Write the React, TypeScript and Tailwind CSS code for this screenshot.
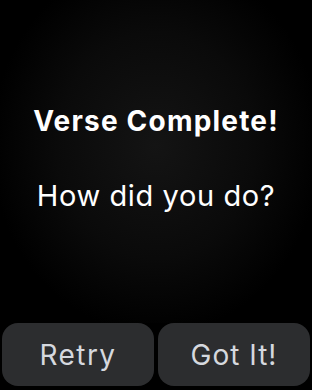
export default function App() {
  return (
    <div
      className="w-[312px] h-[390px] bg-black flex flex-col overflow-hidden"
      style={{ fontFamily: 'Inter, "Noto Sans", sans-serif' }}
    >
      <div className="flex-1 flex flex-col items-center bg-[radial-gradient(ellipse_at_50%_45%,#141414_0%,#0a0a0a_45%,#000_75%)]">
        <h1 className="mt-[103px] text-[28px] leading-[36px] font-bold text-white tracking-[1.2px]">
          Verse Complete!
        </h1>
        <p className="mt-[39px] text-[29px] leading-[36px] font-normal text-white tracking-[0.6px]">
          How did you do?
        </p>
      </div>
      <div className="flex gap-[4px] px-[2px] pb-[4px]">
        <button className="flex-1 h-[63px] rounded-[16px] bg-[#2c2d2f] text-[28px] text-[#d5d8de] font-normal tracking-[1.4px]">
          Retry
        </button>
        <button className="flex-1 h-[63px] rounded-[16px] bg-[#2c2d2f] text-[28px] text-[#d5d8de] font-normal tracking-[1px]">
          Got It!
        </button>
      </div>
    </div>
  );
}
